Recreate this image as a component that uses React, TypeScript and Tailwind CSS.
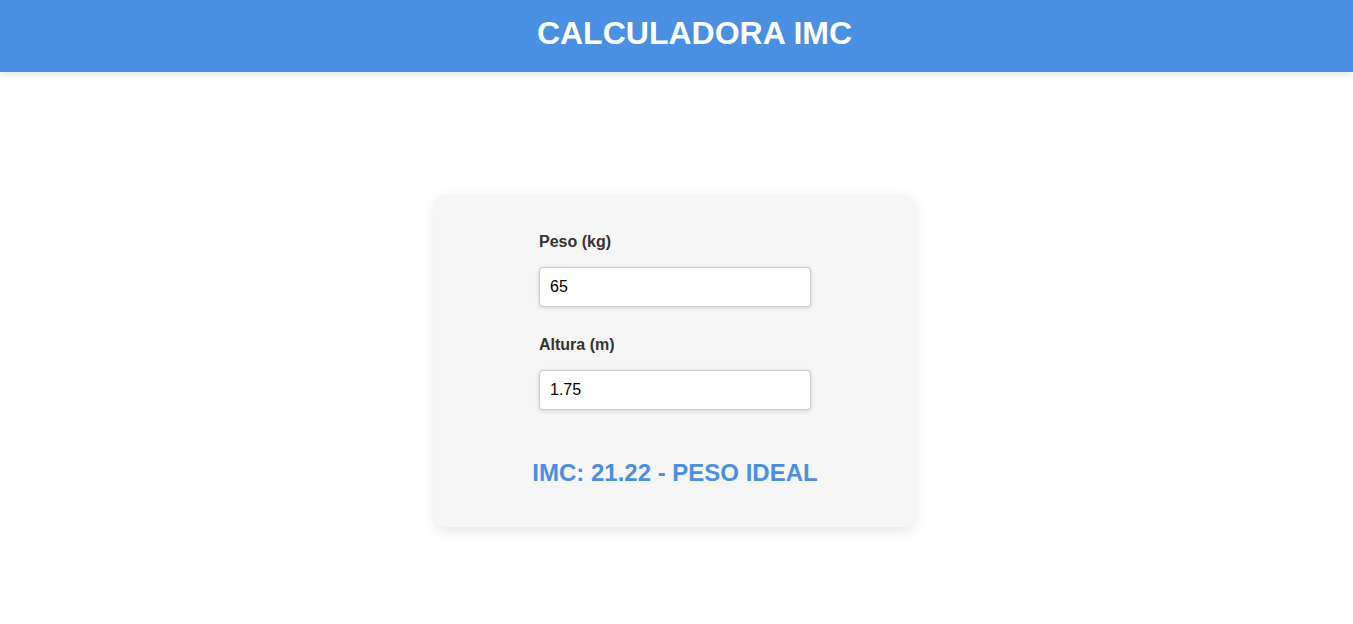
import { useState } from "react";

export default function App() {
  const [peso, setPeso] = useState("65");
  const [altura, setAltura] = useState("1.75");

  const p = parseFloat(peso);
  const a = parseFloat(altura);
  const imc = p && a ? p / (a * a) : 0;
  let faixa = "";
  if (imc < 18.5) faixa = "ABAIXO DO PESO";
  else if (imc < 25) faixa = "PESO IDEAL";
  else if (imc < 30) faixa = "SOBREPESO";
  else faixa = "OBESIDADE";

  return (
    <div className="min-h-screen bg-white font-['Liberation_Sans',Arial,sans-serif]">
      <header className="flex h-[72px] w-full items-center justify-center bg-[#4a90e2] pb-[7px] pl-[36px] shadow-[0_2px_8px_rgba(0,0,0,0.12)]">
        <h1 className="text-[32px] font-bold leading-none text-white">CALCULADORA IMC</h1>
      </header>

      <div className="flex justify-center pr-[3px]">
        <main className="mt-[123px] w-[480px] rounded-[10px] bg-[#f6f6f6] pb-[41px] pt-[38px] shadow-[0_4px_14px_rgba(0,0,0,0.1)]">
          <div className="mx-auto flex w-[272px] flex-col">
            <label className="mb-4 text-base font-bold leading-[18px] text-[#333]">Peso (kg)</label>
            <input
              value={peso}
              onChange={(e) => setPeso(e.target.value)}
              className="mb-[29px] h-10 w-full rounded border border-[#ccc] bg-white px-2.5 text-base text-black shadow-[0_1px_4px_rgba(0,0,0,0.15)] outline-none"
            />
            <label className="mb-4 text-base font-bold leading-[18px] text-[#333]">Altura (m)</label>
            <input
              value={altura}
              onChange={(e) => setAltura(e.target.value)}
              className="h-10 w-full rounded border border-[#ccc] bg-white px-2.5 text-base text-black shadow-[0_1px_4px_rgba(0,0,0,0.15)] outline-none"
            />
          </div>
          <p className="mt-[49px] text-center text-2xl font-bold leading-[27px] text-[#4a90e2]">
            IMC: {imc.toFixed(2)} - {faixa}
          </p>
        </main>
      </div>
    </div>
  );
}
